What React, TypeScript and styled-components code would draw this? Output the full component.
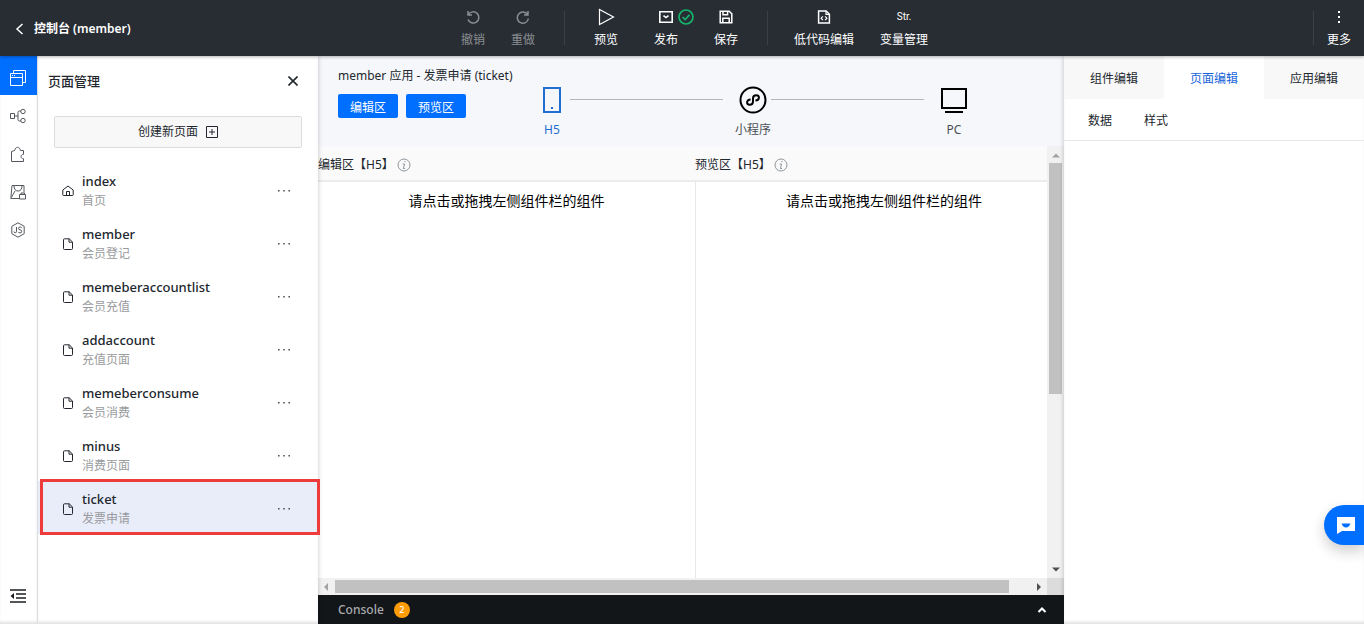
import React from "react";
import styled, { createGlobalStyle, css } from "styled-components";

const GlobalStyle = createGlobalStyle`
  * { box-sizing: border-box; }
  body {
    margin: 0;
    font-family: "Noto Sans", "Noto Sans CJK SC", sans-serif;
    font-size: 12px;
    line-height: 20px;
    color: #22272e;
    background: #fff;
  }
  button {
    font: inherit;
    color: inherit;
    background: none;
    border: 0;
    padding: 0;
    cursor: pointer;
  }
  ul { list-style: none; margin: 0; padding: 0; }
  svg { display: block; flex: none; }
  h2, p { margin: 0; font-weight: 400; }
`;

const Page = styled.div`
  display: flex;
  flex-direction: column;
  min-height: 100vh;
`;

/* ---------- top bar ---------- */

const TopBar = styled.header`
  display: grid;
  grid-template-columns: 1fr auto 1fr;
  height: 56px;
  background: #282d34;
  color: #fff;
  box-shadow: 0 1px 3px rgba(0, 0, 0, 0.3);
  position: relative;
  z-index: 3;
`;

const BackLink = styled.a`
  display: flex;
  align-items: center;
  justify-self: start;
  gap: 8px;
  padding: 2px 0 0 14px;
  color: #fff;
  font-weight: 600;
  text-decoration: none;
`;

const Tools = styled.div`
  display: flex;
  padding-left: 25px;
`;

const ToolGroup = styled.div<{ $gap: number }>`
  display: flex;
  gap: ${(p) => p.$gap}px;
`;

const ToolButton = styled.button<{ $muted?: boolean }>`
  display: flex;
  flex-direction: column;
  align-items: center;
  gap: 3px;
  padding-top: 7px;
  white-space: nowrap;
  color: ${(p) => (p.$muted ? "#8a8d91" : "#fff")};
`;

const ToolIcon = styled.span`
  display: flex;
  position: relative;
  align-items: center;
  justify-content: center;
  height: 20px;
  font: 10px/20px Roboto, sans-serif;
`;

const StatusBadge = styled.span`
  position: absolute;
  left: 100%;
  top: 2px;
  margin-left: 5px;
`;

const Divider = styled.span<{ $before: number; $after: number }>`
  width: 1px;
  height: 34px;
  margin: 11px ${(p) => p.$after}px 0 ${(p) => p.$before}px;
  background: #3b4047;
`;

const MoreArea = styled.div`
  display: flex;
  justify-content: flex-end;
  padding-right: 13px;
`;

/* ---------- columns ---------- */

const Body = styled.div`
  display: flex;
  flex: 1;
`;

const Rail = styled.nav`
  display: flex;
  flex-direction: column;
  flex: none;
  width: 38px;
  border-right: 1px solid #e6e7ea;
  box-shadow: inset 0 -3px 3px -1px rgba(0, 0, 0, 0.12);
`;

const RailButton = styled.button<{ $active?: boolean }>`
  display: flex;
  justify-content: center;
  align-items: center;
  height: ${(p) => (p.$active ? 39 : 38)}px;
  padding: 4px 2px 0 0;
  color: ${(p) => (p.$active ? "#fff" : "#55595f")};
  background: ${(p) => (p.$active ? "#006eff" : "transparent")};
  &:last-child {
    margin-top: auto;
    margin-bottom: 11px;
    color: #1d2024;
  }
`;

const PagesPanel = styled.aside`
  flex: none;
  width: 280px;
  position: relative;
  z-index: 2;
  background: #fff;
  box-shadow: 1px 0 4px rgba(0, 0, 0, 0.16), inset 0 -3px 3px -1px rgba(0, 0, 0, 0.12);
`;

const PanelHead = styled.div`
  display: flex;
  justify-content: space-between;
  align-items: center;
  height: 50px;
  padding: 0 20px 0 10px;
`;

const PanelTitle = styled.h2`
  font-size: 13px;
  font-weight: 500;
`;

const CreateButton = styled.button`
  display: flex;
  justify-content: center;
  align-items: center;
  gap: 8px;
  width: calc(100% - 32px);
  height: 32px;
  margin: 10px 16px 15px;
  border: 1px solid #dcdddf;
  border-radius: 2px;
  background: #f8f8f8;
`;

const PageRow = styled.li<{ $active?: boolean }>`
  display: flex;
  align-items: center;
  height: 53px;
  padding: 3px 28px 0 24px;
  position: relative;
  background: ${(p) => (p.$active ? "#e9edfa" : "transparent")};
  ${(p) =>
    p.$active &&
    css`
      &::after {
        content: "";
        position: absolute;
        inset: -2px -2px -1px 2px;
        border: 3px solid #ee3b3b;
        pointer-events: none;
      }
    `}
`;

const PageText = styled.div`
  display: flex;
  flex-direction: column;
  flex: 1;
  padding-left: 8px;
`;

const PageName = styled.span`
  font-size: 13px;
  font-weight: 500;
`;

const PageNote = styled.span`
  color: #999b9e;
`;

/* ---------- work area ---------- */

const Work = styled.main`
  display: flex;
  flex-direction: column;
  flex: 1;
  min-width: 0;
`;

const PlatformBar = styled.div`
  display: flex;
  height: 90px;
  padding: 10px 92px 0 20px;
  background: #f6f7fa;
`;

const AppInfo = styled.div`
  flex: none;
  width: 196px;
`;

const AreaButtons = styled.div`
  display: flex;
  gap: 8px;
  margin-top: 8px;
`;

const AreaButton = styled.button`
  width: 60px;
  height: 24px;
  padding-top: 3px;
  border-radius: 2px;
  background: #006eff;
  color: #fff;
`;

const Steps = styled.div`
  display: flex;
  flex: 1;
`;

const Step = styled.button<{ $active?: boolean }>`
  display: flex;
  flex-direction: column;
  align-items: center;
  flex: none;
  gap: 6px;
  width: 36px;
  height: 74px;
  padding-top: 20px;
  color: ${(p) => (p.$active ? "#1f6fd0" : "#000")};
`;

const StepLabel = styled.span<{ $active?: boolean }>`
  white-space: nowrap;
  color: ${(p) => (p.$active ? "#1f6fd0" : "#4b4f55")};
`;

const StepLine = styled.span`
  flex: 1;
  height: 1px;
  margin: 33px 12px 0 0;
  background: #b3b7bc;
`;

const ScrollFrame = styled.div`
  display: grid;
  grid-template-columns: minmax(0, 1fr) 17px;
  grid-template-rows: 1fr 17px;
  flex: 1;
`;

const Canvas = styled.div`
  display: flex;
  overflow: hidden;
`;

const Pane = styled.section`
  display: flex;
  flex-direction: column;
  flex: 1 0 377px;
`;

const PaneHead = styled.div`
  display: flex;
  align-items: center;
  gap: 3px;
  height: 36px;
  padding-top: 3px;
  background: #fafafa;
  border-bottom: 2px solid #ebebeb;
`;

const PaneBody = styled.div`
  flex: 1;
  padding-top: 9px;
  text-align: center;
  font-size: 14px;
  color: #000;
  ${Pane} + ${Pane} & {
    border-left: 1px solid #e8e8e8;
  }
`;

const Bar = styled.div<{ $vertical?: boolean }>`
  display: flex;
  flex-direction: ${(p) => (p.$vertical ? "column" : "row")};
  background: #f1f1f1;
`;

const Arrow = styled.span<{ $muted?: boolean }>`
  display: flex;
  flex: none;
  align-items: center;
  justify-content: center;
  width: 17px;
  height: 17px;
  color: ${(p) => (p.$muted ? "#a3a3a3" : "#505050")};
`;

const Track = styled.span<{ $vertical?: boolean }>`
  display: flex;
  flex-direction: ${(p) => (p.$vertical ? "column" : "row")};
  flex: 1;
  padding: ${(p) => (p.$vertical ? "0 2px" : "2px 0")};
`;

const Thumb = styled.span<{ $size: number }>`
  flex: 0 0 ${(p) => p.$size}%;
  background: #c1c1c1;
`;

const Corner = styled.span`
  background: #dcdcdc;
`;

const ConsoleBar = styled.button`
  display: flex;
  align-items: center;
  gap: 10px;
  height: 29px;
  padding: 1px 16px 0 20px;
  background: #131619;
  color: #a9abae;
  font-weight: 500;
  & > :last-child {
    margin-left: auto;
    color: #fff;
  }
`;

const Count = styled.span`
  width: 16px;
  height: 16px;
  border-radius: 50%;
  background: #ff9c07;
  color: #fff;
  font-size: 9px;
  line-height: 16px;
  text-align: center;
`;

/* ---------- inspector ---------- */

const Inspector = styled.aside`
  flex: none;
  width: 300px;
  position: relative;
  z-index: 2;
  background: #fff;
  box-shadow: -1px 0 4px rgba(0, 0, 0, 0.16), inset 0 -3px 3px -1px rgba(0, 0, 0, 0.12);
`;

const TabRow = styled.div`
  display: flex;
`;

const Tab = styled.button<{ $active?: boolean }>`
  flex: 1;
  height: 43px;
  padding-top: 3px;
  background: ${(p) => (p.$active ? "#fff" : "#f8f8f9")};
  color: ${(p) => (p.$active ? "#1664d8" : "#22272e")};
`;

const SubTabRow = styled.div`
  display: flex;
  gap: 32px;
  height: 42px;
  padding: 2px 24px 0;
  border-bottom: 1px solid #e6e8eb;
`;

const ChatButton = styled.button`
  position: fixed;
  right: 0;
  bottom: 79px;
  z-index: 4;
  display: flex;
  align-items: center;
  width: 40px;
  height: 40px;
  padding-left: 13px;
  border-radius: 20px 0 0 20px;
  background: #006eff;
  box-shadow: 0 6px 14px rgba(0, 0, 0, 0.2);
`;

/* ---------- icons ---------- */

type IconProps = {
  w: number;
  h?: number;
  sw?: number;
  children: React.ReactNode;
};

const Icon = ({ w, h = w, sw = 1, children }: IconProps) => (
  <svg
    width={w}
    height={h}
    viewBox={`0 0 ${w} ${h}`}
    fill="none"
    stroke="currentColor"
    strokeWidth={sw}
    aria-hidden="true"
  >
    {children}
  </svg>
);

const UndoIcon = () => (
  <Icon w={16} sw={1.5}>
    <path d="M3 2v4h4M3.4 5.6A5.6 5.6 0 1 1 3 10.4" />
  </Icon>
);
const RedoIcon = () => (
  <Icon w={16} sw={1.5}>
    <path d="M13 2v4H9M12.600 5.600A5.600 5.600 0 1 0 13.400 9.500" />
  </Icon>
);
const PlayIcon = () => (
  <Icon w={18} sw={1.2}>
    <path d="M2.5 1.5v15L16.5 9z" />
  </Icon>
);
const PublishIcon = () => (
  <Icon w={14} h={12} sw={1.6}>
    <path d="M.8.8h12.400v10.400H.8z" />
    <path d="M4.500 4.600 7 6.600l2.500-2" />
  </Icon>
);
const CheckIcon = () => (
  <Icon w={16} sw={1.7}>
    <circle cx="8" cy="8" r="7" stroke="#16b36c" />
    <path d="m4.6 8 2.5 2.5 4.4-4.6" stroke="#16b36c" />
  </Icon>
);
const SaveIcon = () => (
  <Icon w={14} sw={1.5}>
    <path d="M1.2 1.2h9l2.6 2.6v9H1.2zM4 1.2v3.6h4.6V1.2M3.8 12.8V8.2h6.4v4.6" />
  </Icon>
);
const CodeFileIcon = () => (
  <Icon w={14} sw={1.5}>
    <path d="M1.6 1h7.6l3.2 3.2V13H1.6z" />
    <path d="M9 1v3.4h3.4M5.9 6.3 4.1 8.2l1.8 1.9M8.1 6.3l1.8 1.9-1.8 1.9" strokeWidth="1.2" />
  </Icon>
);
const DotsIcon = () => (
  <Icon w={4} h={14} sw={0}>
    <path d="M1 1h2v2H1zM1 6h2v2H1zM1 11h2v2H1z" fill="currentColor" />
  </Icon>
);
const WindowsIcon = () => (
  <Icon w={16} h={16}>
    <path d="M.5 3.5h12v12H.5zM.5 7.5h12M3.5 3.5v-3h12v12h-3M2 5.5h1M4 5.5h1" />
  </Icon>
);
const FlowIcon = () => (
  <Icon w={16}>
    <path d="M.5 5.5h4v5h-4zM4.5 8H8M11 3H9.4Q8 3 8 4.400v7.200Q8 13 9.400 13H11" />
    <circle cx="13" cy="3.500" r="2.200" />
    <circle cx="13" cy="12.500" r="2.200" />
  </Icon>
);
const PuzzleIcon = () => (
  <Icon w={16}>
    <path d="M1.500 5.500v10h12v-2.800c-3.200 0-3.400-4.200 0-4.400V4.500H10.500C9.800.3 5.200.3 4.700 4.500z" />
  </Icon>
);
const PackageIcon = () => (
  <Icon w={16}>
    <path d="M14 8.500V1.500H2L.8 14.500H9M4 1.600q0 5.400 4 5.400t4-5.400M9.500 10.500h6v4.500h-6zM11 10.500V9h3.500v1.500M5 7l-3.600 6.500" />
  </Icon>
);
const JsIcon = () => (
  <Icon w={16}>
    <path d="m8 .8 6.200 3.500v7.400L8 15.200l-6.200-3.500V4.300z" />
    <path d="M6.500 5v4.300q0 1.500-1.300 1.500t-1.300-1.300M11.700 5.800Q11 5 10 5q-1.500 0-1.500 1.400T10 7.800t1.700 1.500T10 10.900q-1.300 0-1.800-1" />
  </Icon>
);
const FoldIcon = () => (
  <Icon w={16} h={14} sw={1.600}>
    <path d="M0 1h16M6 5h10M6 9h10M0 13h16" />
    <path d="M4 4v6L.5 7z" fill="currentColor" stroke="none" />
  </Icon>
);
const CloseIcon = () => (
  <Icon w={10} sw={1.600}>
    <path d="m.5.5 9 9M9.500.5l-9 9" />
  </Icon>
);
const PlusBoxIcon = () => (
  <Icon w={12}>
    <path d="M.5.5h11v11H.5zM3 6h6M6 3v6" />
  </Icon>
);
const HomeIcon = () => (
  <Icon w={12} sw={1}>
    <path d="M1.500 10.500q-.7 0-.7-.7V5L6 1l5.200 4v4.800q0 .7-.7.7zM4.500 10.500V6.500h3v4" />
  </Icon>
);
const FileIcon = () => (
  <Icon w={12}>
    <path d="M2.500.8h4.700l3.300 3.200v6.500q0 1-1 1h-7q-1 0-1-1V1.800q0-1 1-1zM7 .8v3.400h3.500" />
  </Icon>
);
const EllipsisIcon = () => (
  <Icon w={12} h={2} sw={0}>
    <path d="M0 0h1.600v1.600H0zM5.200 0h1.600v1.600H5.200zM10.400 0H12v1.600h-1.600z" fill="#555" />
  </Icon>
);
const InfoIcon = () => (
  <Icon w={14}>
    <g stroke="#90979c">
      <circle cx="7" cy="7" r="6" />
      <path d="M5.600 6h2L6.400 10.500H8M7.300 3.600h1.200" />
    </g>
  </Icon>
);
const PhoneIcon = () => (
  <Icon w={18} h={28} sw={2}>
    <path d="M1 2h16v24H1z" />
    <path d="M8 21h2v2H8z" fill="currentColor" stroke="none" />
  </Icon>
);
const MiniProgramIcon = () => (
  <Icon w={28} sw={2}>
    <circle cx="14" cy="14" r="12.500" />
    <path d="M11.600 13.400c-4.400.2-4.600 5.400-1 5.400 2 0 3.400-1.400 3.400-3.200v-3.200c0-1.800 1.400-3.200 3.400-3.200 3.600 0 3.400 5.200-1 5.400" />
  </Icon>
);
const DesktopIcon = () => (
  <Icon w={26} h={28} sw={2}>
    <path d="M1 3h24v19H1zM4 26h18" />
  </Icon>
);
const ChatIcon = () => (
  <svg width="18" height="18" viewBox="0 0 18 18" aria-hidden="true">
    <path d="M0 1h18v14H5l-5 3z" fill="#fff" />
    <path d="M4.500 7.500h9q-1.500 4-4.500 4t-4.500-4z" fill="#006eff" />
  </svg>
);

const arrowPaths = {
  up: "M0 6.500 4 2.500l4 4z",
  down: "M0 1.500l4 4 4-4z",
  left: "M5 0 1 4l4 4z",
  right: "M2 0l4 4-4 4z",
};
const ArrowIcon = ({ to }: { to: keyof typeof arrowPaths }) => (
  <svg width="8" height="8" viewBox="0 0 8 8" aria-hidden="true">
    <path d={arrowPaths[to]} fill="currentColor" />
  </svg>
);

/* ---------- content ---------- */

const pages = [
  { name: "index", note: "首页" },
  { name: "member", note: "会员登记" },
  { name: "memeberaccountlist", note: "会员充值" },
  { name: "addaccount", note: "充值页面" },
  { name: "memeberconsume", note: "会员消费" },
  { name: "minus", note: "消费页面" },
  { name: "ticket", note: "发票申请" },
];

type ToolProps = {
  icon: React.ReactNode;
  label: string;
  muted?: boolean;
  badge?: React.ReactNode;
};

const Tool = ({ icon, label, muted, badge }: ToolProps) => (
  <ToolButton $muted={muted}>
    <ToolIcon>
      {icon}
      {badge && <StatusBadge>{badge}</StatusBadge>}
    </ToolIcon>
    <span>{label}</span>
  </ToolButton>
);

export default function App() {
  return (
    <Page>
      <GlobalStyle />
      <TopBar>
        <BackLink href="#">
          <Icon w={12} sw={1.500}>
            <path d="M8.500 1 3 6l5.500 5" />
          </Icon>
          控制台 (member)
        </BackLink>
        <Tools>
          <ToolGroup $gap={26}>
            <Tool icon={<UndoIcon />} label="撤销" muted />
            <Tool icon={<RedoIcon />} label="重做" muted />
          </ToolGroup>
          <Divider $before={29} $after={29} />
          <ToolGroup $gap={36}>
            <Tool icon={<PlayIcon />} label="预览" />
            <Tool icon={<PublishIcon />} label="发布" badge={<CheckIcon />} />
            <Tool icon={<SaveIcon />} label="保存" />
          </ToolGroup>
          <Divider $before={29} $after={26} />
          <ToolGroup $gap={26}>
            <Tool icon={<CodeFileIcon />} label="低代码编辑" />
            <Tool icon="Str." label="变量管理" />
          </ToolGroup>
        </Tools>
        <MoreArea>
          <Divider $before={0} $after={13} />
          <Tool icon={<DotsIcon />} label="更多" />
        </MoreArea>
      </TopBar>

      <Body>
        <Rail>
          <RailButton $active aria-label="页面"><WindowsIcon /></RailButton>
          <RailButton aria-label="流程"><FlowIcon /></RailButton>
          <RailButton aria-label="组件"><PuzzleIcon /></RailButton>
          <RailButton aria-label="素材"><PackageIcon /></RailButton>
          <RailButton aria-label="脚本"><JsIcon /></RailButton>
          <RailButton aria-label="收起"><FoldIcon /></RailButton>
        </Rail>

        <PagesPanel>
          <PanelHead>
            <PanelTitle>页面管理</PanelTitle>
            <button aria-label="关闭"><CloseIcon /></button>
          </PanelHead>
          <CreateButton>
            创建新页面
            <PlusBoxIcon />
          </CreateButton>
          <ul>
            {pages.map((page, i) => (
              <PageRow key={page.name} $active={page.name === "ticket"}>
                {i === 0 ? <HomeIcon /> : <FileIcon />}
                <PageText>
                  <PageName>{page.name}</PageName>
                  <PageNote>{page.note}</PageNote>
                </PageText>
                <button aria-label="更多操作"><EllipsisIcon /></button>
              </PageRow>
            ))}
          </ul>
        </PagesPanel>

        <Work>
          <PlatformBar>
            <AppInfo>
              <p>member 应用 - 发票申请 (ticket)</p>
              <AreaButtons>
                <AreaButton>编辑区</AreaButton>
                <AreaButton>预览区</AreaButton>
              </AreaButtons>
            </AppInfo>
            <Steps>
              <Step $active>
                <PhoneIcon />
                <StepLabel $active>H5</StepLabel>
              </Step>
              <StepLine />
              <Step>
                <MiniProgramIcon />
                <StepLabel>小程序</StepLabel>
              </Step>
              <StepLine />
              <Step>
                <DesktopIcon />
                <StepLabel>PC</StepLabel>
              </Step>
            </Steps>
          </PlatformBar>
          <ScrollFrame>
            <Canvas>
              {["编辑区【H5】", "预览区【H5】"].map((title) => (
                <Pane key={title}>
                  <PaneHead>
                    {title}
                    <InfoIcon />
                  </PaneHead>
                  <PaneBody>请点击或拖拽左侧组件栏的组件</PaneBody>
                </Pane>
              ))}
            </Canvas>
            <Bar $vertical>
              <Arrow $muted><ArrowIcon to="up" /></Arrow>
              <Track $vertical><Thumb $size={58} /></Track>
              <Arrow><ArrowIcon to="down" /></Arrow>
            </Bar>
            <Bar>
              <Arrow $muted><ArrowIcon to="left" /></Arrow>
              <Track><Thumb $size={97} /></Track>
              <Arrow><ArrowIcon to="right" /></Arrow>
            </Bar>
            <Corner />
          </ScrollFrame>
          <ConsoleBar>
            Console
            <Count>2</Count>
            <Icon w={12} sw={2}>
              <path d="m2.500 8 3.500-3.500L9.500 8" />
            </Icon>
          </ConsoleBar>
        </Work>

        <Inspector>
          <TabRow>
            <Tab>组件编辑</Tab>
            <Tab $active>页面编辑</Tab>
            <Tab>应用编辑</Tab>
          </TabRow>
          <SubTabRow>
            <button>数据</button>
            <button>样式</button>
          </SubTabRow>
        </Inspector>
      </Body>
      <ChatButton aria-label="在线咨询"><ChatIcon /></ChatButton>
    </Page>
  );
}
